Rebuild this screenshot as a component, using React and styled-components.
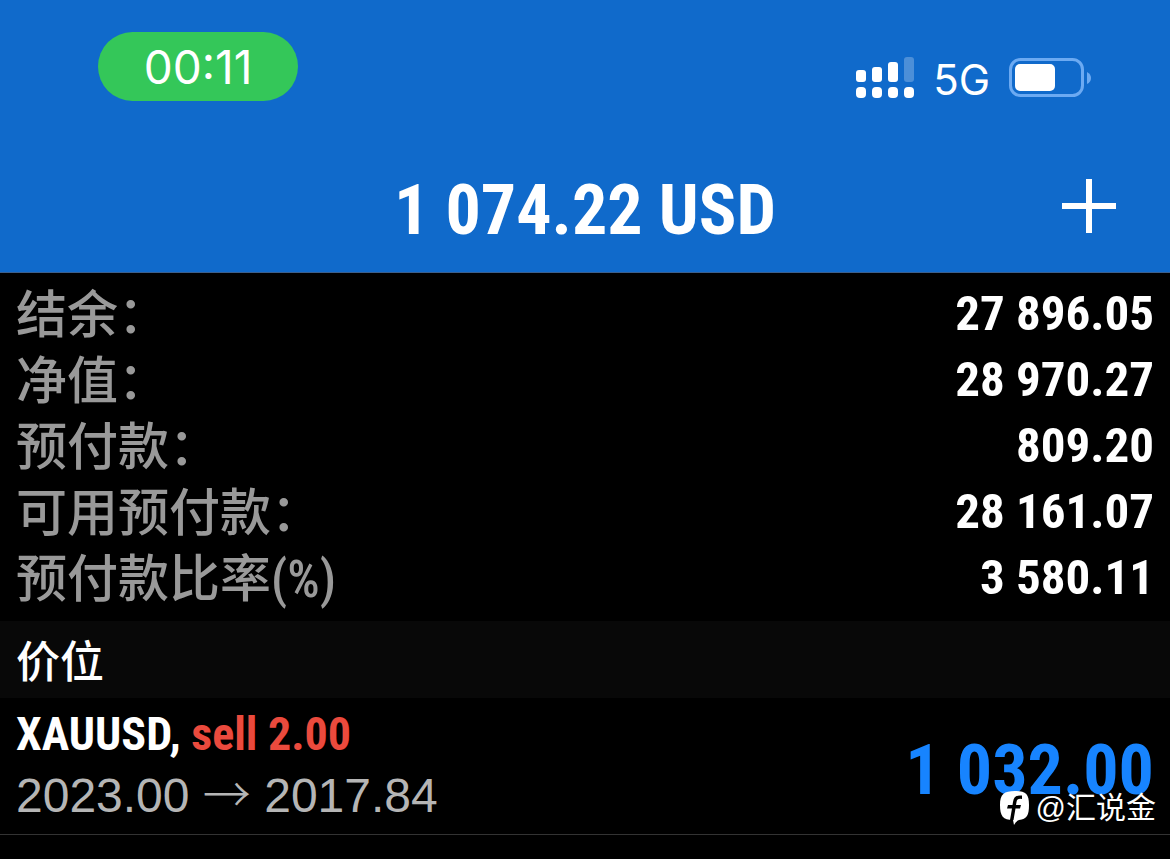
import React from "react";
import styled, { createGlobalStyle } from "styled-components";

const condensed = '"Roboto Condensed", "Noto Sans CJK SC", sans-serif';
const regular = '"Liberation Sans", "Noto Sans CJK SC", sans-serif';
const system = 'Inter, "Noto Sans CJK SC", sans-serif';

const GlobalStyle = createGlobalStyle`
  * { box-sizing: border-box; }
  body { margin: 0; background: #000; color: #fff; font-family: ${condensed}; }
`;

const Page = styled.div`
  min-height: 100vh;
  background: #000;
`;

const Header = styled.header`
  background: #106acb;
  border-bottom: 1px solid #3c5f8c;
`;

const StatusBar = styled.div`
  display: flex;
  align-items: flex-start;
  justify-content: space-between;
  height: 140px;
  padding: 32px 79px 0 98px;
  font-family: ${system};
`;

const Clock = styled.time`
  width: 200px;
  height: 69px;
  border-radius: 35px;
  background: #34c759;
  font-size: 46px;
  line-height: 70px;
  text-align: center;
`;

const Indicators = styled.div`
  display: flex;
  align-items: center;
  height: 48px;
  margin-top: 22px;
  font-size: 42px;
  line-height: 48px;
`;

const Network = styled.span`
  margin: 4px 18px 0 18px;
`;

const TitleBar = styled.div`
  display: grid;
  grid-template-columns: 1fr auto 1fr;
  align-items: center;
  height: 132px;
  padding: 0 54px;
`;

const Title = styled.h1`
  grid-column: 2;
  margin: 0;
  padding-top: 8px;
  font-size: 70px;
  line-height: 80px;
  font-weight: 700;
  white-space: nowrap;
`;

const AddButton = styled.button`
  justify-self: end;
  display: flex;
  padding: 0;
  border: 0;
  background: none;
  color: #fff;
`;

const Summary = styled.dl`
  margin: 0;
  padding: 8px 16px 10px;
`;

const SummaryRow = styled.div`
  display: flex;
  justify-content: space-between;
  align-items: center;
  height: 66px;
  line-height: 66px;
`;

const Label = styled.dt`
  padding-top: 4px;
  color: #999;
  font-size: 51px;
  font-weight: 500;
`;

const Value = styled.dd`
  margin: 0;
  font-size: 49px;
  font-weight: 700;
`;

const SectionTitle = styled.h2`
  margin: 0;
  padding: 7px 16px 0;
  background: #080808;
  font-size: 44px;
  line-height: 70px;
  font-weight: 500;
`;

const Position = styled.article`
  position: relative;
  display: flex;
  justify-content: space-between;
  align-items: center;
  height: 137px;
  padding: 0 16px;
  border-bottom: 1px solid #333;
`;

const Symbol = styled.div`
  font-size: 46px;
  line-height: 60px;
  font-weight: 700;
`;

const Side = styled.span`
  color: #eb4a3d;
`;

const Prices = styled.div`
  color: #b5b5b5;
  font-family: ${regular};
  font-size: 48px;
  line-height: 64px;
`;

const Arrow = styled.span`
  font-family: "Noto Sans CJK SC", sans-serif;
  font-weight: 300;
  line-height: 1;
`;

const Profit = styled.div`
  padding-top: 8px;
  color: #1784ff;
  font-size: 70px;
  line-height: 80px;
  font-weight: 700;
`;

const Watermark = styled.div`
  position: absolute;
  right: 14px;
  bottom: 6px;
  display: flex;
  align-items: center;
  gap: 6px;
  font-family: "Liberation Sans", "Noto Sans CJK SC", sans-serif;
  font-size: 30px;
  line-height: 40px;
`;

function SignalIcon() {
  return (
    <svg width="60" height="42" viewBox="0 0 60 42" fill="#fff" aria-hidden="true">
      <rect x="1" y="13" width="10" height="12" rx="3" />
      <rect x="17" y="10" width="10" height="15" rx="3" />
      <rect x="33" y="5" width="10" height="20" rx="3" />
      <rect x="49" y="0" width="10" height="25" rx="3" opacity="0.25" />
      {[1, 17, 33, 49].map((x) => (
        <rect key={x} x={x} y="30" width="10" height="11" rx="4" />
      ))}
    </svg>
  );
}

function BatteryIcon() {
  return (
    <svg width="83" height="40" viewBox="0 0 83 40" aria-hidden="true">
      <rect x="2.5" y="1.5" width="72" height="36" rx="10" fill="none" stroke="#6caaf2" strokeWidth="3" />
      <rect x="7" y="6" width="40" height="27" rx="5" fill="#fff" />
      <path d="M79 14 Q83 16 83 20 Q83 24 79 26 Z" fill="#6caaf2" />
    </svg>
  );
}

function PlusIcon() {
  return (
    <svg width="54" height="54" viewBox="0 0 54 54" aria-hidden="true">
      <path d="M27 0V54M0 27H54" stroke="currentColor" strokeWidth="6" />
    </svg>
  );
}

function BrandIcon() {
  return (
    <svg width="30" height="36" viewBox="0 0 30 36" aria-hidden="true">
      <path
        d="M15 1C26 1 29 4 29 15C29 25 27 29 19 30Q16 31 14 35L13 30C3 30 0 26 0 15C0 4 4 1 15 1Z"
        fill="#fff"
      />
      <path
        d="M22 5.500V9Q17 8 16.500 12L16 15H21L20 18.500H15.500L13.500 30H10L12 18.500H7L8 15H12.500L13 12Q14 4.500 22 5.500Z"
        fill="#000"
      />
    </svg>
  );
}

const summary = [
  ["结余：", "27 896.05"],
  ["净值：", "28 970.27"],
  ["预付款：", "809.20"],
  ["可用预付款：", "28 161.07"],
  ["预付款比率(%)", "3 580.11"],
];

export default function App() {
  return (
    <Page lang="zh-CN">
      <GlobalStyle />
      <Header>
        <StatusBar>
          <Clock>00:11</Clock>
          <Indicators>
            <SignalIcon />
            <Network>5G</Network>
            <BatteryIcon />
          </Indicators>
        </StatusBar>
        <TitleBar>
          <Title>1 074.22 USD</Title>
          <AddButton type="button" aria-label="添加">
            <PlusIcon />
          </AddButton>
        </TitleBar>
      </Header>
      <main>
        <Summary>
          {summary.map(([label, value]) => (
            <SummaryRow key={label}>
              <Label>{label}</Label>
              <Value>{value}</Value>
            </SummaryRow>
          ))}
        </Summary>
        <SectionTitle>价位</SectionTitle>
        <Position>
          <div>
            <Symbol>
              XAUUSD, <Side>sell 2.00</Side>
            </Symbol>
            <Prices>
              2023.00 <Arrow>→</Arrow> 2017.84
            </Prices>
          </div>
          <Profit>1 032.00</Profit>
          <Watermark>
            <BrandIcon />
            <span>@汇说金</span>
          </Watermark>
        </Position>
      </main>
    </Page>
  );
}
